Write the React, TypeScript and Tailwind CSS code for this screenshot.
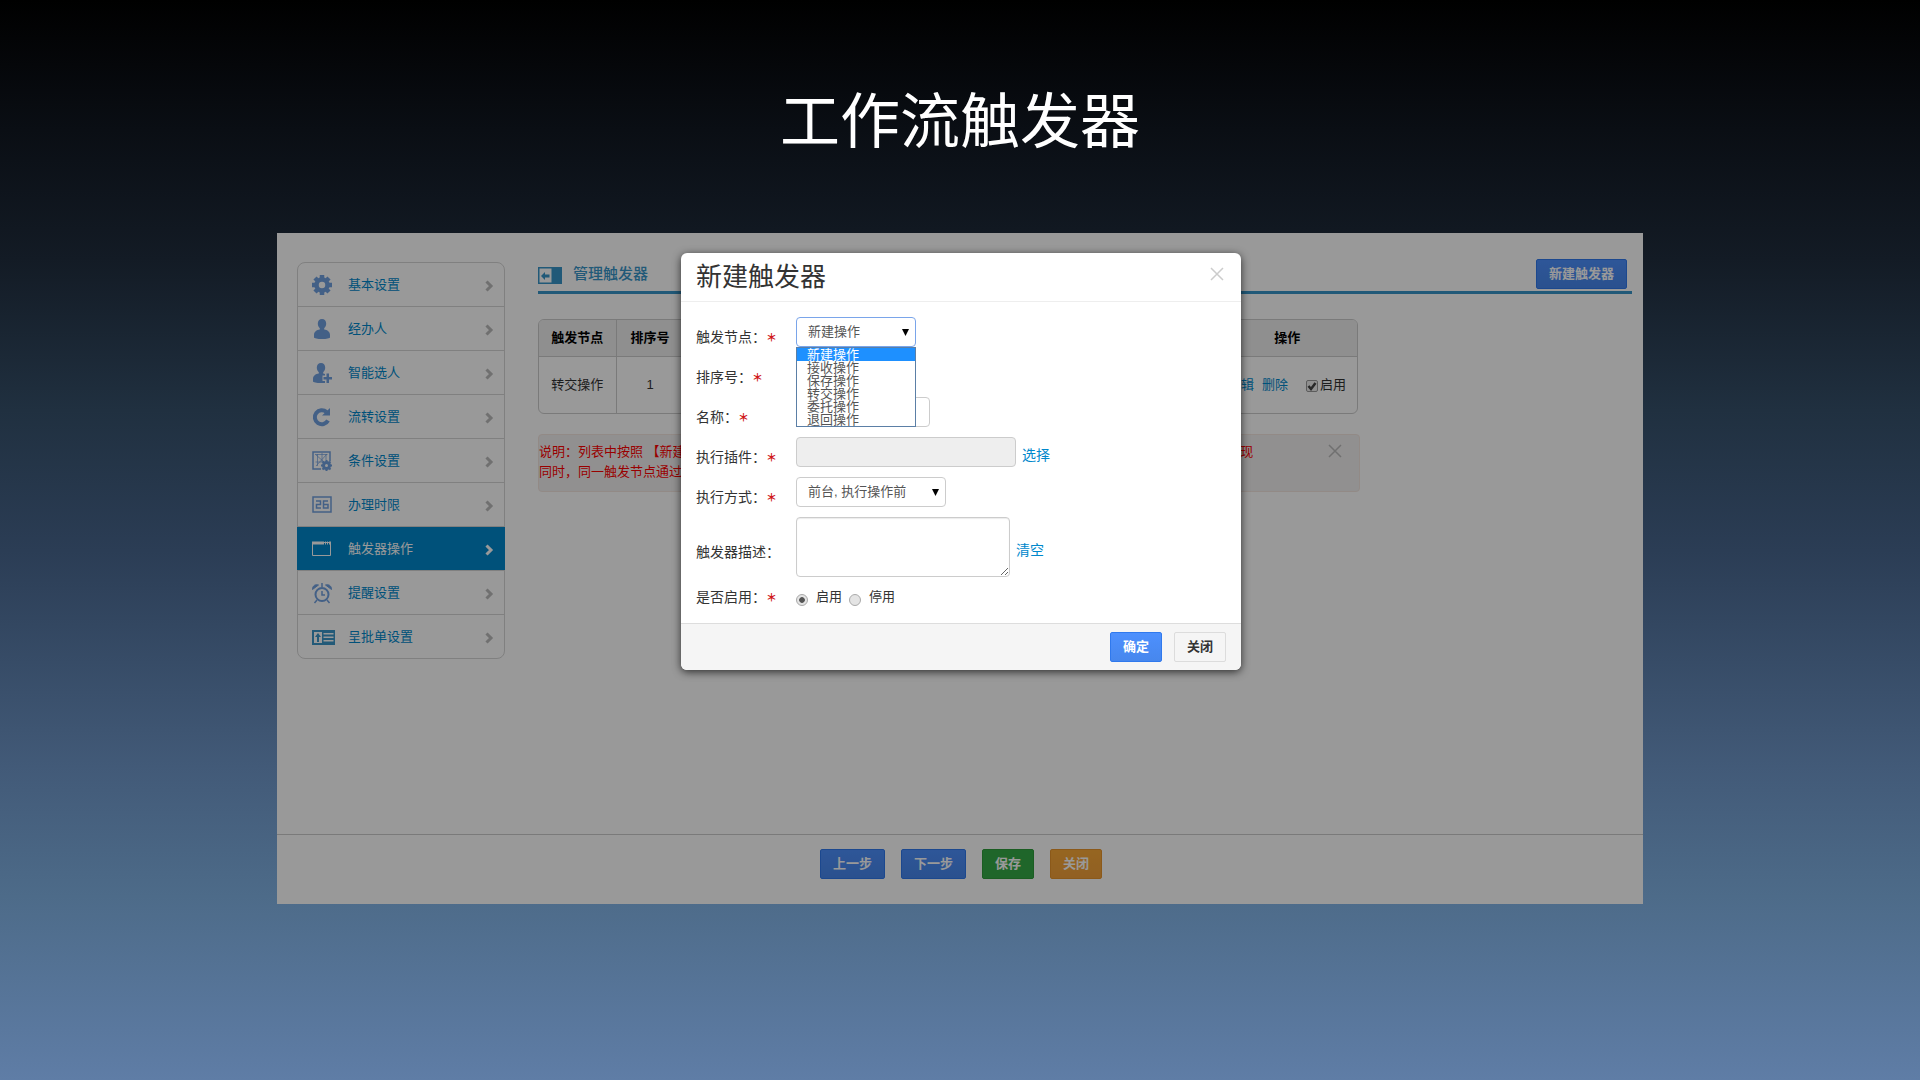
import { useState, type ReactNode } from "react";
import clsx from "clsx";

const svgProps = { width: 24, height: 24, viewBox: "0 0 24 24", fill: "none", "aria-hidden": true } as const;

const GearIcon = () => (
  <svg {...svgProps}>
    <circle cx="11" cy="12" r="5.5" stroke="currentColor" strokeWidth="4.5" />
    <path
      d="M11 2v3M11 19v3M1 12h3M18 12h3M4 5l2 2M16 17l2 2M18 5l-2 2M6 17l-2 2"
      stroke="currentColor"
      strokeWidth="4.5"
    />
  </svg>
);

const UserIcon = () => (
  <svg {...svgProps} fill="currentColor">
    <path d="M11 2c2.6 0 4.2 1.9 4.2 4.6 0 2-.8 3.8-2 4.7v1.2c3.2.6 5.8 2 5.8 5.5v2.5c0 .8-3.5 1.5-8 1.5s-8-.7-8-1.5V18c0-3.5 2.6-4.9 5.8-5.5v-1.2c-1.2-.9-2-2.7-2-4.7C6.8 3.9 8.4 2 11 2z" />
  </svg>
);

const UserPlusIcon = () => (
  <svg {...svgProps} fill="currentColor">
    <path d="M10 2c2.6 0 4.2 1.9 4.2 4.6 0 2-.8 3.8-2 4.7v1.2l1.8.5v1.5h-2.5V20H14v2H10c-4.5 0-8-.7-8-1.5V18c0-3.5 2.6-4.9 5.8-5.5v-1.2c-1.2-.9-2-2.7-2-4.7C5.8 3.9 7.4 2 10 2z" />
    <path d="M15.5 12.500H18V16h3v2.500h-3V22h-2.500v-3.500h-3V16h3z" />
  </svg>
);

const ReloadIcon = () => (
  <svg {...svgProps}>
    <path d="M15.5 7A7 7 0 1 0 17 15.5" stroke="currentColor" strokeWidth="4" />
    <path d="M19 3v7.5h-8z" fill="currentColor" />
  </svg>
);

const ConditionIcon = () => (
  <svg {...svgProps} stroke="currentColor">
    <path d="M10 20H2V3h17v9" strokeWidth="1.5" />
    <path d="M4.5 5.5h12M4.5 13h7M6.5 5v12M11 4v9M15 5v6M4 5l9 8M16 5l-11 12" strokeOpacity="0.7" />
    <circle cx="15.5" cy="16.5" r="3" strokeWidth="3" />
    <path d="M15.5 11v2M15.5 20v2M10 16.5h2M19 16.5h2M11.5 12.5l1.5 1.5M18 19l1.5 1.5M19.5 12.5L18 14M13 19l-1.5 1.5" strokeWidth="2" />
  </svg>
);

const CalendarIcon = () => (
  <svg {...svgProps} stroke="currentColor">
    <path d="M2 4h18v15H2z" strokeWidth="1.5" />
    <path d="M5 8h4.5v3.5H5.5V15H10M17 8h-4.5v7H17v-3.5h-4.5" strokeWidth="1.5" />
  </svg>
);

const WindowIcon = () => (
  <svg {...svgProps} stroke="currentColor">
    <path d="M1.5 5.5h18v13h-18z" />
    <path d="M1 6h12M14 6h1M16 6h1M18 6h2" strokeWidth="3" />
  </svg>
);

const ClockIcon = () => (
  <svg {...svgProps} stroke="currentColor">
    <circle cx="11" cy="13.5" r="6.5" strokeWidth="2" />
    <path d="M11 10v4h3M11 2v4M6 19l-2.5 3M16 19l2.5 3" strokeWidth="1.5" />
    <path d="M1.5 8.5c0-4 3-5.5 6-4.5zM20.5 8.5c0-4-3-5.5-6-4.5z" fill="currentColor" />
  </svg>
);

const FormIcon = () => (
  <svg {...svgProps}>
    <path d="M1 5h23v15H1z" fill="#3b96c8" />
    <path d="M3 7h8v11H3zM12.5 8h10v1.5h-10zM12.5 11.5h10V13h-10zM12.5 15h10v1.5h-10z" fill="#fff" />
    <path d="M7 8l3 4H8v5H6v-5H4z" fill="#3b96c8" />
  </svg>
);

const PanelIcon = () => (
  <svg width="24" height="17" viewBox="0 0 24 17" aria-hidden="true">
    <path d="M0 0h24v17H0z" fill="#3795c8" />
    <path d="M1.5 1.5h12v14h-12z" fill="#fff" />
    <path d="M3 9l4-4v2.5h4.5v3H7V13z" fill="#3795c8" />
  </svg>
);

const ChevronIcon = () => (
  <svg width="9" height="12" viewBox="0 0 9 12" fill="none" aria-hidden="true">
    <path d="M1.5 1.5L6 6l-4.5 4.5" stroke="currentColor" strokeWidth="3" />
  </svg>
);

const CloseIcon = () => (
  <svg width="14" height="14" viewBox="0 0 14 14" fill="none" aria-hidden="true">
    <path d="M1 1l12 12M13 1L1 13" stroke="currentColor" strokeWidth="1.5" />
  </svg>
);

const menu = [
  { name: "基本设置", icon: <GearIcon /> },
  { name: "经办人", icon: <UserIcon /> },
  { name: "智能选人", icon: <UserPlusIcon /> },
  { name: "流转设置", icon: <ReloadIcon /> },
  { name: "条件设置", icon: <ConditionIcon /> },
  { name: "办理时限", icon: <CalendarIcon /> },
  { name: "触发器操作", icon: <WindowIcon />, active: true },
  { name: "提醒设置", icon: <ClockIcon /> },
  { name: "呈批单设置", icon: <FormIcon /> },
];

const nodes = ["新建操作", "接收操作", "保存操作", "转交操作", "委托操作", "退回操作"];

const buttonStyles = {
  primary: "border-[#3079ed] bg-linear-to-b from-[#4d90fe] to-[#4787ed] text-white",
  success: "border-[#2d9b3a] bg-[#35aa47] text-white",
  warning: "border-[#e8942c] bg-linear-to-b from-[#faa937] to-[#f2a03a] text-white",
  plain: "border-[#dcdcdc] bg-[#f5f5f5] text-[#333]",
};

function Button({ kind, children }: { kind: keyof typeof buttonStyles; children: ReactNode }) {
  return (
    <button
      type="button"
      className={clsx("h-[30px] rounded-xs border px-3 text-[13px] leading-5 font-bold", buttonStyles[kind])}
    >
      {children}
    </button>
  );
}

function Sidebar() {
  return (
    <nav className="w-[208px] shrink-0">
      <ul className="rounded-lg border border-[#d6d6d6]">
        {menu.map((item, i) => (
          <li key={item.name} className={clsx(i > 0 ? "h-11 border-t border-[#d6d6d6]" : "h-[43px]", item.active && "-mx-px bg-[#08c]")}>
            <a
              href="#"
              className={clsx(
                "flex h-full items-center",
                item.active ? "pr-[11px] pl-3.5 text-white" : "pr-2.5 pl-[13px] text-[#08c]"
              )}
            >
              <span className={clsx("w-[37px]", !item.active && "text-[#71a0e0]")}>{item.icon}</span>
              <span className="flex-1">{item.name}</span>
              <span className={clsx("pt-0.5", !item.active && "text-[#bbb]")}>
                <ChevronIcon />
              </span>
            </a>
          </li>
        ))}
      </ul>
    </nav>
  );
}

function TriggerTable() {
  return (
    <div className="w-[820px] overflow-hidden rounded-md border border-[#ccc]">
      <table className="w-full table-fixed text-center">
        <colgroup>
          <col className="w-[77px]" />
          <col className="w-[68px]" />
          <col />
          <col className="w-[140px]" />
        </colgroup>
        <thead className="bg-[#eee] text-black">
          <tr className="h-9">
            <th className="border-r border-[#ccc]">触发节点</th>
            <th className="border-r border-[#ccc]">排序号</th>
            <th className="border-r border-[#ccc]" />
            <th>操作</th>
          </tr>
        </thead>
        <tbody>
          <tr className="h-[57px] border-t border-[#ccc]">
            <td className="border-r border-[#ccc]">转交操作</td>
            <td className="border-r border-[#ccc]">1</td>
            <td className="border-r border-[#ccc]" />
            <td>
              <div className="flex items-center justify-end pr-[11px]">
                <a href="#" className="mr-2 text-[#08c]">编辑</a>
                <a href="#" className="mr-[18px] text-[#08c]">删除</a>
                <label className="flex items-center gap-0.5">
                  <span className="relative mt-0.5 flex size-3">
                    <input type="checkbox" defaultChecked className="peer size-3 appearance-none rounded-xs border border-[#999] bg-[#eee]" />
                    <svg viewBox="0 0 12 12" className="pointer-events-none absolute inset-0 hidden size-3 peer-checked:block" fill="none">
                      <path d="M2.5 6l2.5 3 4.5-6" stroke="#444" strokeWidth="2.5" />
                    </svg>
                  </span>
                  启用
                </label>
              </div>
            </td>
          </tr>
        </tbody>
      </table>
    </div>
  );
}

function Star() {
  return <span className="text-[11px] font-bold text-[#d01818]">＊</span>;
}

function Field({ id, label, required, tall, children }: { id: string; label: string; required?: boolean; tall?: boolean; children: ReactNode }) {
  return (
    <div className={clsx("mb-2.5 flex", tall ? "items-center" : "items-start")}>
      <label htmlFor={id} className="h-[30px] w-[100px] shrink-0 pt-2.5 text-sm leading-5">
        {label}：{required && <Star />}
      </label>
      {children}
    </div>
  );
}

const selectClass =
  "h-[30px] w-full appearance-none rounded border bg-white pl-[11px] text-[13px] text-[#555] outline-none";

function Arrow() {
  return (
    <svg width="7" height="7" viewBox="0 0 7 7" className="pointer-events-none absolute top-3 right-[7px]" aria-hidden="true">
      <path d="M0 0h7L3.5 7z" fill="#000" />
    </svg>
  );
}

function TriggerDialog() {
  const [node, setNode] = useState(nodes[0]);
  const inputClass = "h-[30px] rounded border border-[#ccc] px-2";

  return (
    <div role="dialog" aria-labelledby="dialog-title" className="w-[560px] rounded-md bg-white shadow-[0_2px_8px_rgba(0,0,0,0.7)]">
      <header className="flex h-[49px] items-center justify-between border-b border-[#eee] pr-[17px] pl-[15px]">
        <h2 id="dialog-title" className="text-[26px] leading-8 text-[#333]">新建触发器</h2>
        <button type="button" aria-label="关闭" className="mb-1.5 text-[#ccc]">
          <CloseIcon />
        </button>
      </header>

      <form className="px-[15px] pt-[15px] pb-4 text-[#333]">
        <Field id="node" label="触发节点" required>
          <div className="relative w-[120px]">
            <select id="node" value={node} onChange={(e) => setNode(e.target.value)} className={clsx(selectClass, "border-[#7aa5ea]")}>
              {nodes.map((n) => (
                <option key={n}>{n}</option>
              ))}
            </select>
            <Arrow />
            <ul role="listbox" className="absolute top-full left-0 z-10 w-full border border-[#5b7fa6] bg-white text-[13px] leading-[13px] text-[#555]">
              {nodes.map((n) => (
                <li
                  key={n}
                  role="option"
                  aria-selected={n === node}
                  onClick={() => setNode(n)}
                  className={clsx("pl-2.5", n === node && "bg-[#1e90ff] text-white")}
                >
                  {n}
                </li>
              ))}
            </ul>
          </div>
        </Field>
        <Field id="order" label="排序号" required>
          <input id="order" type="text" className={clsx(inputClass, "w-[60px]")} />
        </Field>
        <Field id="name" label="名称" required>
          <input id="name" type="text" className={clsx(inputClass, "w-[134px]")} />
        </Field>
        <Field id="plugin" label="执行插件" required>
          <input id="plugin" type="text" readOnly className={clsx(inputClass, "w-[220px] bg-[#eee]")} />
          <a href="#" className="mt-2 ml-1.5 text-sm leading-5 text-[#08c]">选择</a>
        </Field>
        <Field id="mode" label="执行方式" required>
          <div className="relative w-[150px]">
            <select id="mode" className={clsx(selectClass, "border-[#ccc]")}>
              <option>前台, 执行操作前</option>
            </select>
            <Arrow />
          </div>
        </Field>
        <Field id="desc" label="触发器描述" tall>
          <textarea id="desc" className="h-[60px] w-[214px] rounded border border-[#ccc] shadow-[inset_0_1px_1px_rgba(0,0,0,0.08)]" />
          <a href="#" className="mt-1.5 ml-1.5 text-sm leading-5 text-[#08c]">清空</a>
        </Field>
        <fieldset className="flex h-5 items-center">
          <legend className="float-left w-[100px] text-sm leading-5">
            是否启用：<Star />
          </legend>
          {["启用", "停用"].map((text, i) => (
            <label key={text} className="mr-[7px] flex items-center gap-2 text-[13px] leading-5">
              <input
                type="radio"
                name="enabled"
                defaultChecked={i === 0}
                className="mt-1.5 size-3 appearance-none rounded-full border border-[#aaa] bg-[#e4e4e4] checked:bg-[radial-gradient(circle,#555_35%,#e4e4e4_45%)]"
              />
              {text}
            </label>
          ))}
        </fieldset>
      </form>

      <footer className="flex h-[47px] items-center justify-end gap-3 rounded-b-md border-t border-[#ddd] bg-[#f5f5f5] px-[15px]">
        <Button kind="primary">确定</Button>
        <Button kind="plain">关闭</Button>
      </footer>
    </div>
  );
}

export default function App() {
  return (
    <main className="flex min-h-screen flex-col items-center bg-[linear-gradient(to_bottom,#000_0%,#0a0e14_12%,#131b25_24%,#203040_38%,#2b3d55_51%,#425a78_71%,#4d6b89_83%,#5f7da6_100%)] font-['Liberation_Sans','Noto_Sans_CJK_SC',sans-serif]">
      <h1 className="pt-[78px] pb-[65px] text-[60px] leading-[90px] text-white">工作流触发器</h1>

      <section className="relative flex w-full max-w-[1366px] flex-col bg-white text-[13px] leading-5 text-[#333]">
        <div className="flex min-h-[601px] gap-[33px] pt-[29px] pr-[11px] pl-5">
          <Sidebar />
          <div className="min-w-0 flex-1">
            <div className="flex h-8 items-start justify-between border-b-[3px] border-[#3795c8] pr-[5px]">
              <div className="flex items-center gap-[11px] pt-px text-[15px] font-medium text-[#3795c8]">
                <span className="pt-1">
                  <PanelIcon />
                </span>
                <h2>管理触发器</h2>
              </div>
              <div className="-mt-[3px]">
                <Button kind="primary">新建触发器</Button>
              </div>
            </div>
            <div className="mt-[25px]">
              <TriggerTable />
            </div>
            <div className="mt-5 flex h-[58px] w-[822px] justify-between rounded border border-[#f4e6e0] bg-[#f2f0f0] pt-[7px] pr-[17px] text-[#f00]">
              <p className="whitespace-nowrap [text-spacing-trim:space-all]">
                说明：列表中按照 【新建操作】【接收操作】【保存操作】【转交操作】【委托操作】【退回操作】先后顺序(从上到下)呈现
                <br />
                同时，同一触发节点通过排序号控制先后
              </p>
              <button type="button" aria-label="关闭说明" className="self-start pt-0.5 text-[#bbb]">
                <CloseIcon />
              </button>
            </div>
          </div>
        </div>
        <div className="flex h-[70px] justify-center gap-4 border-t border-[#ccc] pt-3.5 pl-0.5">
          <Button kind="primary">上一步</Button>
          <Button kind="primary">下一步</Button>
          <Button kind="success">保存</Button>
          <Button kind="warning">关闭</Button>
        </div>

        <div className="absolute inset-0 flex items-start justify-center bg-black/40 pt-5 pl-0.5">
          <TriggerDialog />
        </div>
      </section>
    </main>
  );
}
